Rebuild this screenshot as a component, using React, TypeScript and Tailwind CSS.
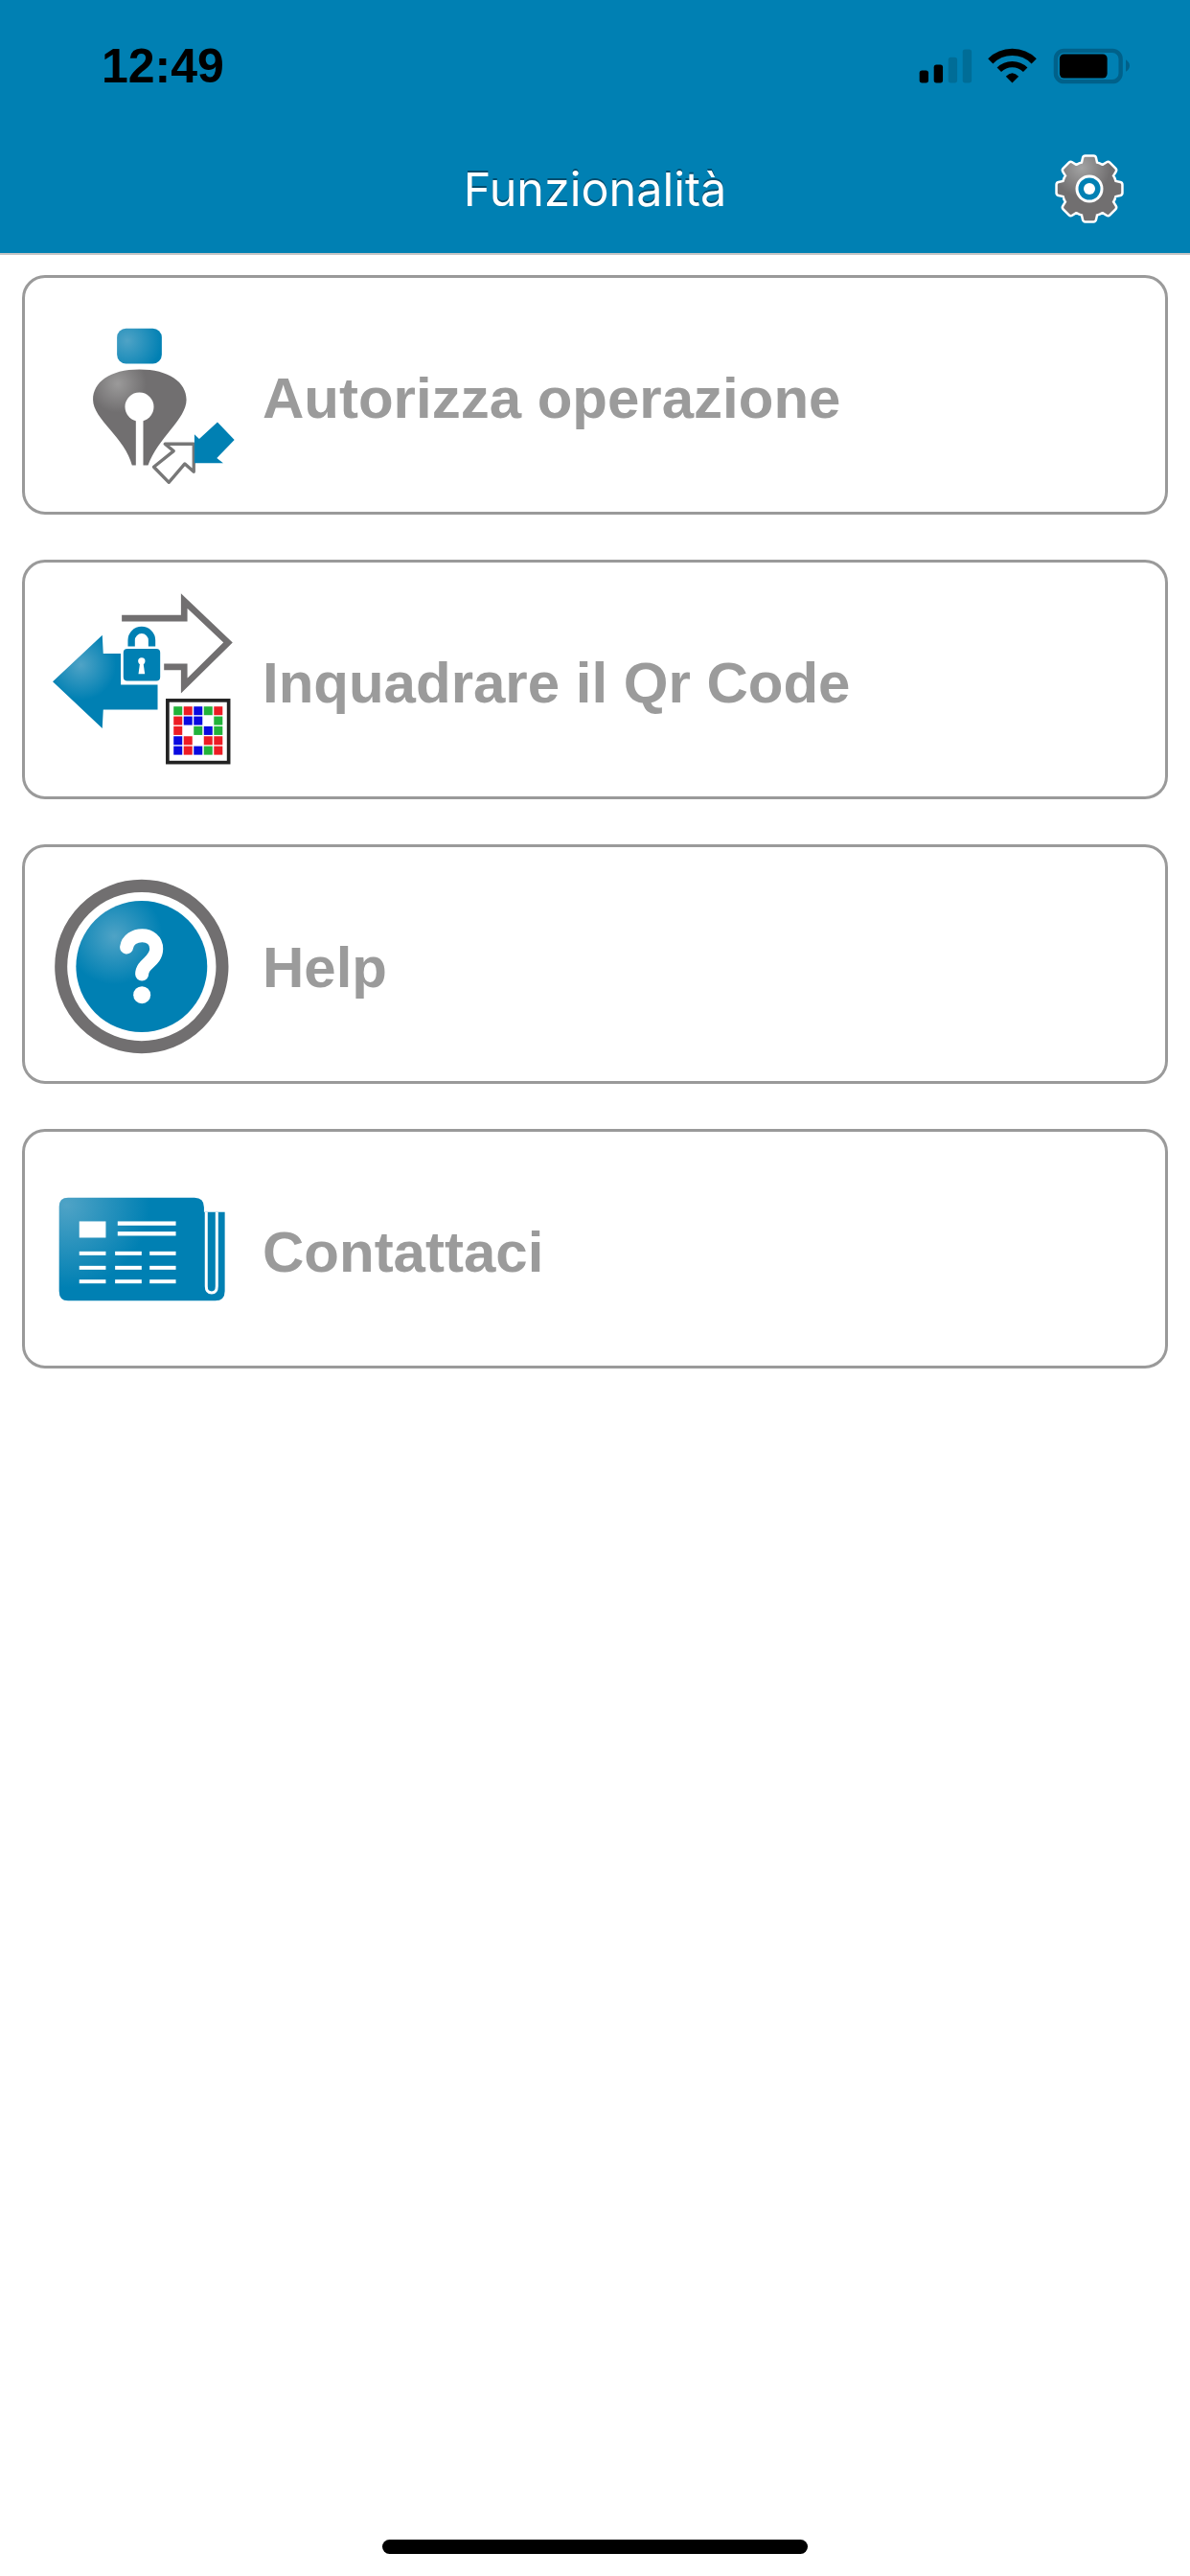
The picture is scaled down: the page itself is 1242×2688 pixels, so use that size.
import type { ReactNode } from 'react'

const BLUE = '#0080b3'
const GRAY = '#716f70'

// shared highlight used by the glossy blue parts of the icons
function Gloss({ id, cx, cy, r }: { id: string; cx: number; cy: number; r: number }) {
  return (
    <radialGradient id={id} gradientUnits="userSpaceOnUse" cx={cx} cy={cy} r={r}>
      <stop offset="0" stopColor="#4fa3c6" />
      <stop offset="1" stopColor={BLUE} />
    </radialGradient>
  )
}

function PenIcon() {
  return (
    <svg viewBox="149 146 620 560" className="h-[187px] w-[207px]">
      <defs>
        <Gloss id="pen-blue" cx={400} cy={255} r={110} />
        <radialGradient id="pen-gray" gradientUnits="userSpaceOnUse" cx={370} cy={390} r={90}>
          <stop offset="0" stopColor="#9b9a9a" />
          <stop offset="1" stopColor={GRAY} />
        </radialGradient>
      </defs>
      <rect x="368" y="217" width="140" height="110" rx="28" fill="url(#pen-blue)" />
      <path
        d="M438 345C530 345 585 385 585 440C585 500 495 560 465 645L450 645L450 490L427 490L427 645L415 645C395 560 293 500 293 440C293 385 345 345 438 345Z"
        fill="url(#pen-gray)"
      />
      <circle cx="438" cy="462" r="45" fill="#fff" />
      <path
        d="M608 578L608 665L580 640L530 698L483 650L545 600L518 578Z"
        fill="#fff"
        stroke="#777"
        strokeWidth="10"
        strokeLinejoin="round"
      />
      <path d="M610 548L625 562L682 510L735 565L680 622L700 638L610 638Z" fill={BLUE} />
    </svg>
  )
}

const QR_ROWS = ['grbgr', 'rbb.g', 'r.gbg', 'br.rr', 'brbgr']
const QR_COLORS: Record<string, string> = { g: '#22b33a', r: '#ed1c24', b: '#0a0ae0' }

function QrIcon() {
  return (
    <svg viewBox="149 137 620 560" className="h-[187px] w-[207px]">
      <defs>
        <Gloss id="qr-blue" cx={255} cy={370} r={110} />
      </defs>
      <path
        d="M383 224L578 224L578 170L715 300L578 435L578 376L515 376"
        fill="none"
        stroke={GRAY}
        strokeWidth="20"
      />
      <path
        d="M167 422L322 277L325 335L380 335L380 432L495 432L495 510L325 510L322 568Z"
        fill="url(#qr-blue)"
      />
      <path d="M413 320V293A32 32 0 0 1 477 293V320" fill="none" stroke={BLUE} strokeWidth="22" />
      <rect x="384" y="316" width="123" height="108" rx="16" fill={BLUE} stroke="#fff" strokeWidth="8" />
      <circle cx="445" cy="358" r="11" fill="#fff" />
      <path d="M440 362H450L455 398H435Z" fill="#fff" />
      <rect x="526" y="481" width="191" height="194" fill="#fff" stroke="#222" strokeWidth="11" />
      {QR_ROWS.map((row, y) =>
        row.split('').map((c, x) =>
          c === '.' ? null : (
            <rect
              key={`${x}-${y}`}
              x={545 + x * 31.5}
              y={500 + y * 31}
              width="27"
              height="27"
              fill={QR_COLORS[c]}
            />
          ),
        ),
      )}
    </svg>
  )
}

function HelpIcon() {
  return (
    <svg viewBox="149 128 620 560" className="h-[187px] w-[207px]">
      <defs>
        <Gloss id="help-blue" cx={360} cy={320} r={150} />
      </defs>
      <circle cx="445" cy="414" r="252" fill="none" stroke={GRAY} strokeWidth="39" />
      <circle cx="445" cy="414" r="205" fill="url(#help-blue)" />
      <path
        d="M398 354C404 306 492 302 491 360C490 400 446 404 446 438"
        fill="none"
        stroke="#fff"
        strokeWidth="42"
        strokeLinecap="round"
      />
      <circle cx="446" cy="503" r="27" fill="#fff" />
    </svg>
  )
}

function NewsIcon() {
  return (
    <svg viewBox="149 119 620 560" className="h-[187px] w-[207px]">
      <defs>
        <radialGradient id="news-blue" gradientUnits="userSpaceOnUse" cx={210} cy={260} r={260}>
          <stop offset="0" stopColor="#4fa3c6" />
          <stop offset="1" stopColor={BLUE} />
        </radialGradient>
      </defs>
      <path
        d="M215 238H610Q640 238 640 268V283H705V530Q705 560 675 560H215Q187 560 187 530V266Q187 238 215 238Z"
        fill="url(#news-blue)"
      />
      <path
        d="M647 283V515Q647 535 664 535Q680 535 680 515V283"
        fill="none"
        stroke="#fff"
        strokeWidth="9"
      />
      <g fill="#fff">
        <rect x="250" y="312" width="83" height="51" />
        <rect x="370" y="312" width="182" height="13" />
        <rect x="370" y="344" width="182" height="13" />
        {[406, 451, 494].map((y) => (
          <g key={y}>
            <rect x="250" y={y} width="83" height="12" />
            <rect x="362" y={y} width="83" height="12" />
            <rect x="470" y={y} width="82" height="12" />
          </g>
        ))}
      </g>
    </svg>
  )
}

function gearPath(cx: number, cy: number, outer: number, inner: number, teeth: number) {
  const pts: string[] = []
  const step = (Math.PI * 2) / teeth
  for (let i = 0; i < teeth; i++) {
    const a = i * step - Math.PI / 2
    const offs: [number, number][] = [
      [-0.5, inner],
      [-0.28, inner],
      [-0.17, outer],
      [0.17, outer],
      [0.28, inner],
    ]
    for (const [o, r] of offs) {
      const t = a + o * step
      pts.push(`${(cx + Math.cos(t) * r).toFixed(1)} ${(cy + Math.sin(t) * r).toFixed(1)}`)
    }
  }
  return `M${pts.join('L')}Z`
}

function GearIcon() {
  const d = gearPath(40, 40, 32, 26, 8)
  return (
    <svg viewBox="0 0 80 80" className="h-20 w-20">
      <defs>
        <radialGradient id="gear-gray" gradientUnits="userSpaceOnUse" cx={32} cy={18} r={30}>
          <stop offset="0" stopColor="#a3a3a3" />
          <stop offset="1" stopColor={GRAY} />
        </radialGradient>
      </defs>
      <path d={d} fill="#fff" stroke="#fff" strokeWidth="8" strokeLinejoin="round" />
      <path d={d} fill="url(#gear-gray)" stroke="url(#gear-gray)" strokeWidth="3" strokeLinejoin="round" />
      <circle cx="40" cy="40" r="14.5" fill="#fff" />
      <circle cx="40" cy="40" r="11.5" fill={BLUE} />
      <circle cx="40" cy="40" r="6" fill="#fff" />
    </svg>
  )
}

function StatusIcons() {
  return (
    <svg viewBox="50 50 665 125" className="h-[42px] w-[222px]">
      <rect x="55" y="126" width="28" height="39" rx="8" />
      <rect x="100" y="108" width="28" height="57" rx="8" />
      <rect x="145" y="85" width="28" height="80" rx="8" fill="#006d97" />
      <rect x="190" y="60" width="28" height="105" rx="8" fill="#006d97" />
      <path d="M277 97A96 96 0 0 1 413 97" fill="none" stroke="#000" strokeWidth="22" />
      <path d="M304 124A58 58 0 0 1 386 124" fill="none" stroke="#000" strokeWidth="19" />
      <path d="M345 165L325 145Q345 124 365 145Z" />
      <rect x="481" y="64" width="203" height="97" rx="26" fill="none" stroke="#00618a" strokeWidth="13" />
      <rect x="493" y="75" width="149" height="75" rx="14" />
      <path d="M700 92Q712 100 712 111Q712 122 700 130Z" fill="#00618a" />
    </svg>
  )
}

function MenuCard({ icon, label }: { icon: ReactNode; label: string }) {
  return (
    <button className="flex h-[250px] w-full items-center rounded-[24px] border-[3px] border-[#9a9a9a] bg-white text-left">
      <span className="ml-[4px] flex w-[244px] shrink-0 items-center justify-center">{icon}</span>
      <span className="pt-[8px] text-[60px] leading-none font-bold text-[#9b9b9b]">{label}</span>
    </button>
  )
}

export default function App() {
  return (
    <div className="flex h-[2688px] w-full flex-col bg-white font-['Liberation_Sans',Arial,sans-serif]">
      <header className="h-[266px] shrink-0 border-b-2 border-[#c4c4c4] bg-[#0080b3]">
        <div className="flex h-[138px] items-center justify-between pr-[62px] pl-[106px]">
          <span className="text-[50px] font-bold text-black">12:49</span>
          <StatusIcons />
        </div>
        <div className="flex h-[118px] items-center justify-between px-[65px]">
          <span className="w-20" />
          <h1 className="pt-[2px] font-['Inter',sans-serif] text-[48.5px] leading-none font-normal text-white [text-shadow:0_-2px_0_#004d6e]">
            Funzionalità
          </h1>
          <GearIcon />
        </div>
      </header>

      <main className="flex flex-col gap-[47px] px-[23px] pt-[21px]">
        <MenuCard icon={<PenIcon />} label="Autorizza operazione" />
        <MenuCard icon={<QrIcon />} label="Inquadrare il Qr Code" />
        <MenuCard icon={<HelpIcon />} label="Help" />
        <MenuCard icon={<NewsIcon />} label="Contattaci" />
      </main>

      <div className="mt-auto flex justify-center pb-[23px]">
        <div className="h-[15px] w-[444px] rounded-full bg-black" />
      </div>
    </div>
  )
}
